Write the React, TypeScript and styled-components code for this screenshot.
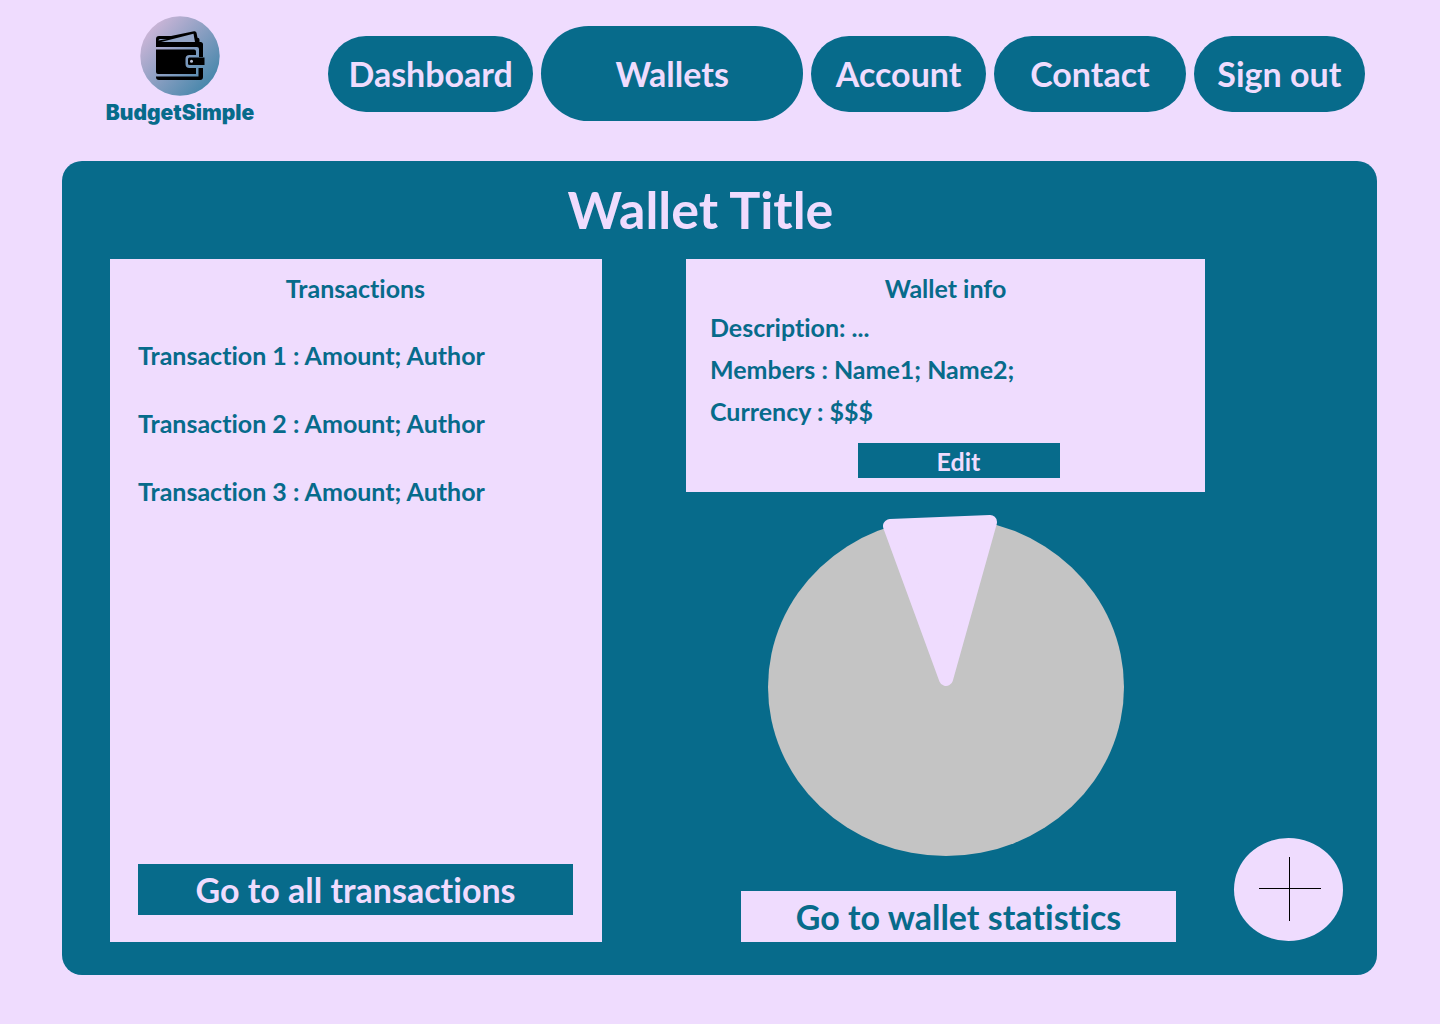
import React from "react";
import styled, { createGlobalStyle } from "styled-components";

const teal = "#076b8b";
const lilac = "#efdcfe";

const GlobalStyle = createGlobalStyle`
  *, *::before, *::after { box-sizing: border-box; }
  body {
    margin: 0;
    background: ${lilac};
    color: ${teal};
    font-family: Lato, "Open Sans", sans-serif;
    font-weight: 700;
    font-variant-ligatures: none;
  }
  button { font: inherit; border: 0; padding: 0; cursor: pointer; }
  h1, h2, p, ul { margin: 0; padding: 0; }
  ul { list-style: none; }
`;

const Page = styled.div`
  padding: 0 63px 49px 62px;
`;

const Header = styled.header`
  display: flex;
  align-items: flex-start;
  gap: 62px;
  min-height: 161px;
  padding: 15px 12px 0 32px;
`;

const Brand = styled.a`
  display: flex;
  flex-direction: column;
  align-items: center;
  flex: 0 0 172px;
  color: ${teal};
  font-family: Inter, Lato, sans-serif;
  font-size: 21px;
  line-height: 32px;
  font-weight: 900;
  text-decoration: none;

  svg { display: block; }
`;

const Nav = styled.nav`
  display: flex;
  align-items: center;
  flex: 1;
  gap: 8px;
  padding-top: 11px;
`;

const NavLink = styled.a<{ $grow: number; $active?: boolean }>`
  display: flex;
  align-items: center;
  justify-content: center;
  flex: ${(p) => p.$grow} 1 0;
  height: ${(p) => (p.$active ? 95 : 76)}px;
  border-radius: 48px;
  background: ${teal};
  color: ${lilac};
  font-size: 34px;
  line-height: 40px;
  text-decoration: none;
  white-space: nowrap;
`;

const Panel = styled.main`
  padding: 20px 34px 33px 48px;
  border-radius: 20px;
  background: ${teal};
`;

const Title = styled.h1`
  padding-right: 52px;
  color: ${lilac};
  font-size: 52px;
  line-height: 56px;
  text-align: center;
`;

const Columns = styled.div`
  display: grid;
  grid-template-columns: minmax(0, 492fr) minmax(0, 657fr);
  gap: 84px;
  margin-top: 22px;
`;

const Card = styled.section`
  display: flex;
  flex-direction: column;
  background: ${lilac};
  font-size: 25px;
  line-height: 32px;
`;

const TransactionsCard = styled(Card)`
  padding: 13px 29px 27px 28px;
`;

const InfoCard = styled(Card)`
  padding: 13px 24px 14px;
`;

const CardTitle = styled.h2`
  font-size: 25px;
  line-height: 32px;
  text-align: center;
`;

const TransactionList = styled.ul`
  display: flex;
  flex-direction: column;
  flex: 1;
  gap: 36px;
  padding-top: 35px;
`;

const InfoList = styled.ul`
  display: flex;
  flex-direction: column;
  gap: 10px;
  padding-top: 7px;
`;

const WideButton = styled.button<{ $inverse?: boolean }>`
  width: 100%;
  max-width: 435px;
  height: 51px;
  background: ${(p) => (p.$inverse ? lilac : teal)};
  color: ${(p) => (p.$inverse ? teal : lilac)};
  font-size: 34px;
  line-height: 40px;
`;

const EditButton = styled.button`
  width: 202px;
  height: 35px;
  background: ${teal};
  color: ${lilac};
  font-size: 25px;
  line-height: 32px;
`;

const ActionRow = styled.div`
  display: flex;
  justify-content: center;
  padding-left: 26px;
`;

const InfoActions = styled(ActionRow)`
  margin-top: 16px;
`;

const Side = styled.div`
  display: flex;
  align-items: flex-end;
  gap: 29px;
`;

const Overview = styled.div`
  flex: 1;
`;

const Chart = styled.svg`
  display: block;
  margin: 23px auto 35px;
`;

const AddButton = styled.button`
  display: flex;
  align-items: center;
  justify-content: center;
  flex: 0 0 109px;
  height: 103px;
  margin-bottom: 1px;
  border-radius: 50%;
  background: ${lilac};
`;

const links = [
  { label: "Dashboard", grow: 205 },
  { label: "Wallets", grow: 261, active: true },
  { label: "Account", grow: 175 },
  { label: "Contact", grow: 191 },
  { label: "Sign out", grow: 171 },
];

const transactions = [1, 2, 3];

function WalletLogo() {
  return (
    <svg width="80" height="82" viewBox="0 0 80 82" aria-hidden="true">
      <defs>
        <linearGradient id="disc" x1="0.1" y1="0.15" x2="0.85" y2="0.85">
          <stop offset="0" stopColor="#cdb6d8" />
          <stop offset="1" stopColor="#4a88ac" />
        </linearGradient>
      </defs>
      <circle cx="40" cy="41" r="39.7" fill="url(#disc)" />
      <path d="M16 32v-8q0-3 3-3h12l23-4.800q2-.4 2.500 1.500l1 5q2 0 2 2V27h1q2.500 0 2.500 2.500V42h-4v-8q0-2-2-2z" />
      <path d="M21 27 53.500 18.800 55 27z" fill="#93a5c6" />
      <path d="M18.500 25.500q0-1.500 1.500-1.500h7z" fill="#93a5c6" />
      <path d="M16 34.500h38q2 0 2 2V40h-6.500q-4 0-4 4v5q0 4 4 4H56v6H18q-2 0-2-2z" />
      <path d="M16 61.500h42.500V53H63v9q0 3-3 3H19q-3 0-3-3z" />
      <path d="M49.500 42.500h15V50h-15q-1.500 0-1.500-1.500V44q0-1.500 1.500-1.500z" />
      <circle cx="51.500" cy="46.300" r="1.500" fill="#b8c0d8" />
    </svg>
  );
}

export default function App() {
  return (
    <>
      <GlobalStyle />
      <Page>
        <Header>
          <Brand href="#">
            <WalletLogo />
            BudgetSimple
          </Brand>
          <Nav>
            {links.map((l) => (
              <NavLink key={l.label} href="#" $grow={l.grow} $active={l.active}>
                {l.label}
              </NavLink>
            ))}
          </Nav>
        </Header>
        <Panel>
          <Title>Wallet Title</Title>
          <Columns>
            <TransactionsCard>
              <CardTitle>Transactions</CardTitle>
              <TransactionList>
                {transactions.map((n) => (
                  <li key={n}>Transaction {n} : Amount; Author</li>
                ))}
              </TransactionList>
              <WideButton type="button">Go to all transactions</WideButton>
            </TransactionsCard>
            <Side>
              <Overview>
                <InfoCard>
                  <CardTitle>Wallet info</CardTitle>
                  <InfoList>
                    <li>Description: ...</li>
                    <li>Members : Name1; Name2;</li>
                    <li>Currency : $$$</li>
                  </InfoList>
                  <InfoActions>
                    <EditButton type="button">Edit</EditButton>
                  </InfoActions>
                </InfoCard>
                <Chart width="356" height="341" viewBox="0 0 356 341" role="img" aria-label="Wallet statistics">
                  <ellipse cx="178" cy="172" rx="178" ry="169" fill="#c4c4c4" />
                  <path
                    d="M122 11 222 7 178 164z"
                    fill={lilac}
                    stroke={lilac}
                    strokeWidth="14"
                    strokeLinejoin="round"
                  />
                </Chart>
                <ActionRow>
                  <WideButton type="button" $inverse>
                    Go to wallet statistics
                  </WideButton>
                </ActionRow>
              </Overview>
              <AddButton type="button" aria-label="Add transaction">
                <svg width="65" height="65" viewBox="0 0 65 65" stroke="#000" aria-hidden="true">
                  <path d="M3 31.500H65M33.500 0V64" />
                </svg>
              </AddButton>
            </Side>
          </Columns>
        </Panel>
      </Page>
    </>
  );
}
